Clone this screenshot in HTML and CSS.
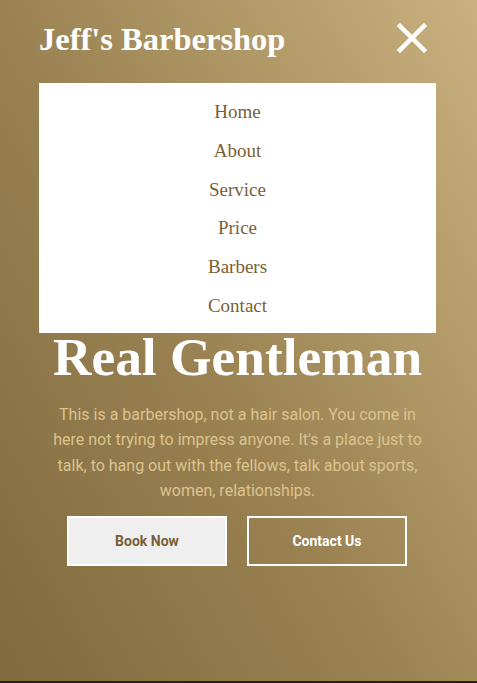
FILE: index.html
```html
<!DOCTYPE html>
<html>
<head>
<meta charset="utf-8">
<link rel="stylesheet" href="styles.css">
</head>
<body>
<section class="hero">
  <header class="topbar">
    <div class="brand">Jeff's Barbershop</div>
    <button class="close" aria-label="Close menu">
      <svg width="30" height="30" viewBox="0 0 30 30"><path d="M3 3 L27 27 M27 3 L3 27" stroke="#fff" stroke-width="4.5" stroke-linecap="square"/></svg>
    </button>
  </header>
  <nav class="menu">
    <a href="#">Home</a>
    <a href="#">About</a>
    <a href="#">Service</a>
    <a href="#">Price</a>
    <a href="#">Barbers</a>
    <a href="#">Contact</a>
  </nav>
  <div class="content">
    <h1 class="title">Real Gentleman</h1>
    <p class="lead">This is a barbershop, not a hair salon. You come in here not trying to impress anyone. It's a place just to talk, to hang out with the fellows, talk about sports, women, relationships.</p>
    <div class="actions">
      <a class="btn btn-light" href="#">Book Now</a>
      <a class="btn btn-outline" href="#">Contact Us</a>
    </div>
  </div>
</section>
</body>
</html>
```

FILE: styles.css
```css
html, body {
  margin: 0;
  padding: 0;
  background: #222;
}
.hero {
  height: 681px;
  background: linear-gradient(60deg, #806a3e 0%, #9a8252 45%, #c9b27f 100%);
  box-sizing: border-box;
  padding: 0 41px 0 39px;
  display: flex;
  flex-direction: column;
}
.topbar {
  display: flex;
  justify-content: space-between;
  align-items: center;
  height: 83px;
  padding-right: 9px;
}
.brand {
  font-family: "Liberation Serif", serif;
  font-weight: bold;
  font-size: 32.5px;
  color: #fff;
  margin-top: -5px;
}
.close {
  background: none;
  border: 0;
  padding: 0;
  width: 30px;
  height: 30px;
  margin-top: -7px;
  display: flex;
}
.menu {
  background: #fff;
  display: flex;
  flex-direction: column;
  align-items: center;
  padding: 10px 0 7px;
}
.menu a {
  font-family: "Liberation Serif", serif;
  font-size: 19px;
  color: #7a5f36;
  text-decoration: none;
  line-height: 38.8px;
}
.content {
  display: flex;
  flex-direction: column;
  align-items: center;
  text-align: center;
}
.title {
  font-family: "Liberation Serif", serif;
  font-weight: bold;
  font-size: 53.4px;
  color: #fff;
  margin: -3px 0 0;
  line-height: 54px;
}
.lead {
  font-family: Roboto, sans-serif;
  font-size: 16px;
  line-height: 25.5px;
  color: #dcc48e;
  margin: 18px 0 0;
  padding: 0 12px;
}
.actions {
  display: flex;
  gap: 20px;
  margin-top: 12px;
  margin-right: 1px;
}
.btn {
  box-sizing: border-box;
  width: 160px;
  height: 50px;
  border: 2px solid #fff;
  display: flex;
  align-items: center;
  justify-content: center;
  font-family: Roboto, sans-serif;
  font-weight: bold;
  font-size: 14px;
  text-decoration: none;
}
.btn-light {
  background: #efefef;
  color: #7a5f36;
}
.btn-outline {
  background: transparent;
  color: #fff;
}
```
